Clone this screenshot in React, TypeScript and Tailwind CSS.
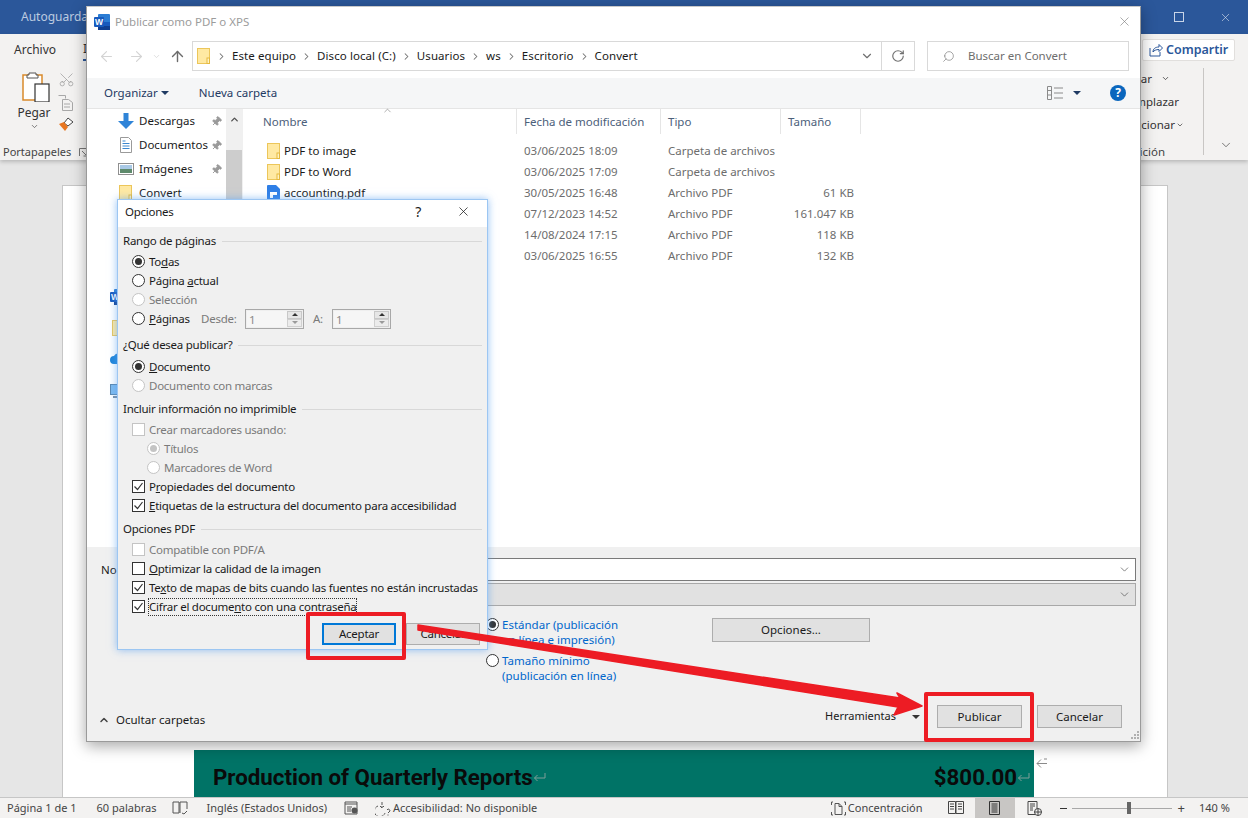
import React from "react";
import { ArrowLeft, ArrowRight, ArrowUp, ChevronDown, ChevronRight, ChevronUp, Pin, RotateCw, Scissors, Search, X } from "lucide-react";

const FolderIcon = ({ className = "" }: { className?: string }) => (
  <svg width="13" height="16" viewBox="0 0 13 16" className={className}>
    <rect x="0.5" y="0.5" width="12" height="15" fill="#ffe9a3" stroke="#ecc65a" />
    <rect x="10" y="10" width="2.5" height="5.5" fill="#fff3c4" stroke="#e6b93f" />
  </svg>
);

const PdfIcon = () => (
  <svg width="13" height="16" viewBox="0 0 13 16">
    <path d="M1 0h8l4 4v11a1 1 0 0 1-1 1H1a1 1 0 0 1-1-1V1a1 1 0 0 1 1-1z" fill="#2f7fe6" />
    <path d="M3 7h7v3H6v3H3z" fill="#fff" />
  </svg>
);

const WordIcon = () => (
  <svg width="16" height="16" viewBox="0 0 16 16">
    <rect x="4" y="0" width="12" height="16" rx="1" fill="#2b7cd3" />
    <rect x="4" y="8" width="12" height="4" fill="#185abd" />
    <rect x="4" y="12" width="12" height="4" fill="#103f91" />
    <rect x="0" y="3" width="10" height="10" rx="1" fill="#185abd" />
    <text x="5" y="11" textAnchor="middle" fontSize="8.5" fontWeight="700" fill="#fff" fontFamily="'Liberation Sans', sans-serif">W</text>
  </svg>
);

const Radio = ({ on = false, disabled = false }: { on?: boolean; disabled?: boolean }) => (
  <span className={`flex h-[13px] w-[13px] shrink-0 items-center justify-center rounded-full border bg-white ${disabled ? "border-[#c4c4c4]" : "border-[#333333]"}`}>
    {on && <span className={`h-[7px] w-[7px] rounded-full ${disabled ? "bg-[#c4c4c4]" : "bg-[#333333]"}`} />}
  </span>
);

const Check = ({ on = false, disabled = false }: { on?: boolean; disabled?: boolean }) => (
  <span className={`flex h-[13px] w-[13px] shrink-0 items-center justify-center border bg-white ${disabled ? "border-[#c4c4c4]" : "border-[#333333]"}`}>
    {on && (
      <svg width="11" height="11" viewBox="0 0 11 11">
        <path d="M1.5 5.5l3 3 5-6.5" fill="none" stroke="#333333" strokeWidth="1.2" />
      </svg>
    )}
  </span>
);

const Caret = ({ className = "" }: { className?: string }) => (
  <svg width="8" height="4" viewBox="0 0 8 4" className={className}>
    <path d="M0 0h8L4 4z" fill="currentColor" />
  </svg>
);

const ReturnMark = ({ className = "" }: { className?: string }) => (
  <svg width="13" height="11" viewBox="0 0 13 11" className={className}>
    <path d="M12 1v5H1.5M4.5 3L1.5 6l3 3" fill="none" stroke="#7f9f98" strokeWidth="1" />
  </svg>
);

const SectionHead = ({ title }: { title: string }) => (
  <div className="flex h-[18px] items-center pl-[5px] pr-[5px] pt-[2px] text-[#1a1a1a]">
    <span>{title}</span>
    <span className="ml-[6px] h-px flex-1 bg-[#d8d8d8]" />
  </div>
);

const Spin = () => (
  <div className="flex h-[20px] w-[59px] border border-[#a8a8a8] bg-[#efefef] p-px">
    <div className="flex-1 bg-[#f6f6f6] pl-[2px] leading-[18px] text-[#8a8a8a]">1</div>
    <div className="flex w-[15px] flex-col">
      <div className="flex flex-1 items-center justify-center border border-[#c8c8c8] bg-[#e6e6e6] text-[#333333]">
        <Caret className="h-[3px] w-[6px] rotate-180" />
      </div>
      <div className="flex flex-1 items-center justify-center border border-[#d0d0d0] bg-[#ececec] text-[#9a9a9a]">
        <Caret className="h-[3px] w-[6px]" />
      </div>
    </div>
  </div>
);

const Crumb = ({ label }: { label: string }) => (
  <>
    <ChevronRight size={11} strokeWidth={2.2} className="text-[#707070]" />
    <span className="text-[#1a1a1a]">{label}</span>
  </>
);

const files = [
  { icon: "folder", name: "PDF to image", date: "03/06/2025 18:09", type: "Carpeta de archivos", size: "" },
  { icon: "folder", name: "PDF to Word", date: "03/06/2025 17:09", type: "Carpeta de archivos", size: "" },
  { icon: "pdf", name: "accounting.pdf", date: "30/05/2025 16:48", type: "Archivo PDF", size: "61 KB" },
  { icon: "", name: "", date: "07/12/2023 14:52", type: "Archivo PDF", size: "161.047 KB" },
  { icon: "", name: "", date: "14/08/2024 17:15", type: "Archivo PDF", size: "118 KB" },
  { icon: "", name: "", date: "03/06/2025 16:55", type: "Archivo PDF", size: "132 KB" },
];

const PublishDialog = () => (
  <div className="absolute left-[86px] top-[6px] flex h-[736px] w-[1055px] flex-col border border-[#9a9a9a] border-t-[#c8c8c8] bg-white shadow-[0_4px_14px_rgba(0,0,0,0.35)]">
    <div className="flex h-[29px] shrink-0 items-center pl-[7px] pr-[8px]">
      <WordIcon />
      <span className="ml-[5px] text-[#9c9c9c]">Publicar como PDF o XPS</span>
      <X size={15} strokeWidth={1} className="ml-auto text-[#7a7a7a]" />
    </div>
    <div className="flex h-[42px] shrink-0 items-start pt-[5px] pl-[11px] pr-[11px]">
      <div className="flex h-[30px] w-[94px] items-center">
        <ArrowLeft size={17} strokeWidth={1.6} className="text-[#d4d4d4]" />
        <ArrowRight size={17} strokeWidth={1.6} className="ml-[13px] text-[#d4d4d4]" />
        <ChevronDown size={9} strokeWidth={2} className="ml-[7px] text-[#d4d4d4]" />
        <ArrowUp size={17} strokeWidth={2} className="ml-[8px] text-[#6b6b6b]" />
      </div>
      <div className="flex h-[30px] w-[723px] items-center border border-[#d9d9d9] pl-[4px]">
        <FolderIcon />
        <div className="ml-[6px] flex items-center gap-[5px] tracking-[0.08px]">
          <Crumb label="Este equipo" />
          <Crumb label="Disco local (C:)" />
          <Crumb label="Usuarios" />
          <Crumb label="ws" />
          <Crumb label="Escritorio" />
          <Crumb label="Convert" />
        </div>
        <ChevronDown size={14} strokeWidth={2} className="ml-auto mr-[7px] text-[#707070]" />
        <div className="flex h-full w-[33px] items-center justify-center border-l border-[#d9d9d9]">
          <RotateCw size={14} strokeWidth={2} className="text-[#707070]" />
        </div>
      </div>
      <div className="ml-[12px] flex h-[30px] w-[202px] items-center border border-[#d9d9d9] pl-[14px]">
        <Search size={13} strokeWidth={1.2} className="-scale-x-100 text-[#777777]" />
        <span className="ml-[13px] text-[#6d6d6d]">Buscar en Convert</span>
      </div>
    </div>
    <div className="flex h-[31px] shrink-0 items-center border-b border-[#e5e5e5] bg-[#f5f6f7] pl-[17px] pr-[14px] text-[#1f3a63]">
      <span>Organizar</span>
      <Caret className="ml-[3px]" />
      <span className="ml-[30px]">Nueva carpeta</span>
      <svg width="17" height="14" viewBox="0 0 17 14" className="ml-auto text-[#8a8a8a]">
        <path d="M0.5 0.5h4v13h-4zM0.5 4.5h4M0.5 9h4M7 2h9M7 7h9M7 12h9" fill="none" stroke="currentColor" />
      </svg>
      <Caret className="ml-[9px]" />
      <span className="ml-[29px] flex h-[16px] w-[16px] items-center justify-center rounded-full bg-[#0a66bd] text-[12px] font-bold leading-none text-white">?</span>
    </div>
    <div className="flex h-[438px] shrink-0">
      <div className="flex w-[156px] shrink-0">
        <div className="w-[139px] shrink-0">
          {[
            { label: "Descargas", icon: <svg width="16" height="16" viewBox="0 0 16 16"><path d="M5.5 0h5v8H16l-8 8-8-8h5.5z" fill="#2f84d8" /></svg> },
            { label: "Documentos", icon: <svg width="16" height="16" viewBox="0 0 16 16"><path d="M2.5.5h8l3 3v12h-11z" fill="#fff" stroke="#9a9a9a" /><path d="M4.5 4h3M4.5 6.5h7M4.5 9h7M4.5 11.5h7" stroke="#3b87cf" /></svg> },
            { label: "Imágenes", icon: <svg width="16" height="16" viewBox="0 0 16 16"><rect x=".5" y="2.5" width="15" height="11" fill="#fff" stroke="#8f8f8f" /><rect x="2" y="4" width="12" height="4" fill="#a9c9e6" /><rect x="2" y="8" width="12" height="4" fill="#5e8a6c" /></svg> },
          ].map((row) => (
            <div key={row.label} className="flex h-[24px] items-center pl-[31px]">
              {row.icon}
              <span className="ml-[5px] text-[#1a1a1a]">{row.label}</span>
              <Pin size={11} className="ml-auto mr-[4px] rotate-45 fill-[#9a9a9a] text-[#9a9a9a]" />
            </div>
          ))}
          <div className="flex h-[24px] items-center pl-[32px]">
            <FolderIcon />
            <span className="ml-[7px] text-[#1a1a1a]">Convert</span>
          </div>
          <div className="mt-[84px] flex flex-col pl-[23px]">
            <WordIcon />
            <FolderIcon className="ml-[2px] mt-[15px]" />
            <svg width="16" height="13" viewBox="0 0 16 13" className="mt-[15px]"><path d="M4 13a4 4 0 0 1 0-8 5 5 0 0 1 9 1 3.5 3.5 0 0 1 0 7z" fill="#1f84d8" /></svg>
            <svg width="16" height="15" viewBox="0 0 16 15" className="mt-[20px]"><rect x=".5" y=".5" width="15" height="10" fill="#7db9ee" stroke="#5b88b0" /><path d="M3 13h10" stroke="#7a8ea3" strokeWidth="2" /></svg>
          </div>
        </div>
        <div className="flex w-[16px] shrink-0 flex-col bg-[#f0f0f0]">
          <div className="flex h-[41px] justify-center pt-[5px]">
            <ChevronUp size={11} strokeWidth={3} className="text-[#505050]" />
          </div>
          <div className="flex-1 bg-[#cdcdcd]" />
        </div>
        <div className="w-px shrink-0 bg-[#f0f0f0]" />
      </div>
      <div className="relative flex-1 text-[#6d6d6d]">
        <ChevronUp size={11} strokeWidth={1.2} className="absolute left-[139px] -top-[4px] text-[#6d6d6d]" />
        <div className="grid h-[25px] grid-cols-[274px_144px_120px_80px] text-[#4c607a]">
          <div className="flex items-center border-r border-[#e5e5e5] pl-[20px]">Nombre</div>
          <div className="flex items-center border-r border-[#e5e5e5] pl-[7px]">Fecha de modificación</div>
          <div className="flex items-center border-r border-[#e5e5e5] pl-[7px]">Tipo</div>
          <div className="flex items-center border-r border-[#e5e5e5] pl-[7px]">Tamaño</div>
        </div>
        <div className="mt-[6px]">
          {files.map((f) => (
            <div key={f.date} className="grid h-[21px] grid-cols-[274px_144px_120px_80px] items-center">
              <div className="flex items-center pl-[24px] text-[#1a1a1a]">
                {f.icon === "folder" && <FolderIcon />}
                {f.icon === "pdf" && <PdfIcon />}
                <span className="ml-[4px]">{f.name}</span>
              </div>
              <div className="pl-[7px]">{f.date}</div>
              <div className="pl-[7px]">{f.type}</div>
              <div className="pr-[7px] text-right">{f.size}</div>
            </div>
          ))}
        </div>
      </div>
    </div>
    <div className="relative flex-1 bg-[#f0f0f0] pt-[11px]">
      <div className="flex h-[23px] items-center pr-[4px]">
        <span className="ml-[14px] w-[120px] shrink-0 text-[#1a1a1a]">Nombre de archivo:</span>
        <div className="flex h-full flex-1 items-center justify-end border border-[#7a7a7a] bg-white pr-[4px]">
          <ChevronDown size={13} strokeWidth={1.2} className="text-[#444444]" />
        </div>
      </div>
      <div className="mt-[2px] flex h-[23px] items-center pr-[4px]">
        <span className="w-[134px] shrink-0" />
        <div className="flex h-full flex-1 items-center justify-end border border-[#a8a8a8] bg-[#e1e1e1] pr-[4px]">
          <ChevronDown size={13} strokeWidth={1.2} className="text-[#444444]" />
        </div>
      </div>
      <div className="mt-[12px] flex pl-[399px]">
        <div className="-mt-px w-[226px] leading-[15px] text-[#0066cc]">
          <div className="flex">
            <span className="mt-px"><Radio on /></span>
            <span className="ml-[3px]">Estándar (publicación<br />en línea e impresión)</span>
          </div>
          <div className="mt-[6px] flex">
            <span className="mt-px"><Radio /></span>
            <span className="ml-[3px]">Tamaño mínimo<br />(publicación en línea)</span>
          </div>
        </div>
        <button className="h-[24px] w-[158px] border border-[#adadad] bg-[#e1e1e1] text-[#1a1a1a]">Opciones...</button>
      </div>
      <div className="mt-[22px] flex h-[23px] items-center pl-[11px] pr-[18px] text-[#1a1a1a]">
        <ChevronUp size={12} strokeWidth={3} className="mt-[6px] text-[#444444]" />
        <span className="ml-[6px] mt-[6px]">Ocultar carpetas</span>
        <span className="ml-auto text-[11px]">Herramientas</span>
        <Caret className="ml-[16px] text-[#333333]" />
        <button className="ml-[17px] h-[23px] w-[85px] border border-[#adadad] bg-[#e1e1e1]">Publicar</button>
        <button className="ml-[15px] h-[23px] w-[85px] border border-[#adadad] bg-[#e1e1e1]">Cancelar</button>
      </div>
      <svg width="8" height="8" viewBox="0 0 8 8" className="absolute bottom-[2px] right-[1px] text-[#b0b0b0]">
        <path d="M6 0h2v2H6zM3 3h2v2H3zM6 3h2v2H6zM0 6h2v2H0zM3 6h2v2H3zM6 6h2v2H6z" fill="currentColor" />
      </svg>
    </div>
  </div>
);

const OptionsDialog = () => (
  <div className="absolute left-[117px] top-[199px] flex h-[451px] w-[371px] flex-col whitespace-nowrap border border-[#9cc6f2] bg-[#f0f0f0] tracking-[-0.25px] text-[#1a1a1a] shadow-[0_0_8px_rgba(90,160,240,0.65)]">
    <div className="flex h-[27px] shrink-0 items-center bg-white pb-[4px] pl-[7px] pr-[16px]">
      <span>Opciones</span>
      <span className="ml-auto mr-[35px] text-[14px]">?</span>
      <X size={15} strokeWidth={1.2} className="text-[#1a1a1a]" />
    </div>
    <div className="mt-[4px]"><SectionHead title="Rango de páginas" /></div>
    <div className="mt-[3px] pl-[14px]">
      <div className="flex h-[19px] items-center gap-[4px]"><Radio on /><span>To<u>d</u>as</span></div>
      <div className="flex h-[19px] items-center gap-[4px]"><Radio /><span>Página <u>a</u>ctual</span></div>
      <div className="flex h-[19px] items-center gap-[4px] text-[#7a7a7a]"><Radio disabled /><span>Selección</span></div>
      <div className="flex h-[19px] items-center gap-[4px]">
        <Radio />
        <span className="w-[48px]"><u>P</u>áginas</span>
        <span className="w-[40px] text-[#7a7a7a]">Desde:</span>
        <Spin />
        <span className="ml-[5px] w-[15px] text-[#7a7a7a]">A:</span>
        <Spin />
      </div>
    </div>
    <div className="mt-[7px]"><SectionHead title="¿Qué desea publicar?" /></div>
    <div className="mt-[4px] pl-[14px]">
      <div className="flex h-[19px] items-center gap-[4px]"><Radio on /><span><u>D</u>ocumento</span></div>
      <div className="flex h-[19px] items-center gap-[4px] text-[#7a7a7a]"><Radio disabled /><span>Documento con marcas</span></div>
    </div>
    <div className="mt-[4px]"><SectionHead title="Incluir información no imprimible" /></div>
    <div className="mt-[3px] pl-[14px]">
      <div className="flex h-[19px] items-center gap-[4px] text-[#7a7a7a]"><Check disabled /><span>Crear marcadores usando:</span></div>
      <div className="flex h-[19px] items-center gap-[4px] pl-[15px] text-[#7a7a7a]"><Radio on disabled /><span>Títulos</span></div>
      <div className="flex h-[19px] items-center gap-[4px] pl-[15px] text-[#7a7a7a]"><Radio disabled /><span>Marcadores de Word</span></div>
      <div className="flex h-[19px] items-center gap-[4px]"><Check on /><span>P<u>r</u>opiedades del documento</span></div>
      <div className="flex h-[19px] items-center gap-[4px]"><Check on /><span><u>E</u>tiquetas de la estructura del documento para accesibilidad</span></div>
    </div>
    <div className="mt-[4px]"><SectionHead title="Opciones PDF" /></div>
    <div className="mt-[3px] pl-[14px]">
      <div className="flex h-[19px] items-center gap-[4px] text-[#7a7a7a]"><Check disabled /><span>Compatible con PDF/A</span></div>
      <div className="flex h-[19px] items-center gap-[4px]"><Check /><span><u>O</u>ptimizar la calidad de la imagen</span></div>
      <div className="flex h-[19px] items-center gap-[4px]"><Check on /><span>Te<u>x</u>to de mapas de bits cuando las fuentes no están incrustadas</span></div>
      <div className="flex h-[19px] items-center gap-[3px]"><Check on /><span className="border border-dotted border-[#333333] leading-[16px]">Cifrar el docume<u>n</u>to con una contraseña</span></div>
    </div>
    <div className="mt-[7px] flex justify-end gap-[10px] pr-[7px]">
      <button className="h-[22px] w-[74px] border-2 border-[#0078d7] bg-[#e1e1e1]">Aceptar</button>
      <button className="h-[22px] w-[74px] border border-[#adadad] bg-[#e1e1e1]">Cancelar</button>
    </div>
  </div>
);

export default function App() {
  return (
    <div className="relative h-[818px] w-[1248px] overflow-hidden bg-[#e6e6e6] font-['Noto_Sans','Liberation_Sans',sans-serif] text-[11.5px]">
      <div className="flex h-full flex-col">
        <div className="flex h-[34px] shrink-0 items-center bg-[#2b579a] pl-[21px] pr-[16px] text-[12px] text-white">
          <span className="text-[#bccbe0]">Autoguardado</span>
          <svg width="10" height="10" viewBox="0 0 10 10" className="ml-auto"><rect x=".5" y=".5" width="9" height="9" fill="none" stroke="#c9d5e8" /></svg>
          <X size={13} strokeWidth={1.1} className="ml-[35px] text-[#dfe6f1]" />
        </div>
        <div className="relative h-[126px] shrink-0 bg-[#f3f2f1] shadow-[0_2px_4px_rgba(0,0,0,0.2)]">
          <div className="flex h-[30px] items-center pl-[14px] pr-[13px] pt-[2px] text-[12px] text-[#333333]">
            <span>Archivo</span>
            <span className="ml-[27px] border-b-2 border-[#2b579a] pb-[1px]">Inicio</span>
            <div className="ml-auto flex h-[22px] w-[93px] items-center rounded-[2px] border border-[#e1dfdd] bg-white pl-[6px] text-[12.5px] font-semibold text-[#2b579a]">
              <svg width="14" height="14" viewBox="0 0 14 14"><path d="M1 5v8h10V9M4 9c0-3 2-5 6-5V1.500l3.500 3.500L10 8.500V6.500C7 6.500 5 7.500 4 9z" fill="none" stroke="#2b579a" /></svg>
              <span className="ml-[3px]">Compartir</span>
            </div>
          </div>
          <div className="flex h-[96px]">
            <div className="w-[92px] shrink-0">
              <div className="flex h-[80px]">
                <div className="flex w-[58px] flex-col items-center pl-[10px] pt-[8px]">
                  <svg width="28" height="30" viewBox="0 0 28 30" className="ml-[3px]">
                    <rect x="1" y="3" width="19" height="25" fill="#fff" stroke="#d98a2b" strokeWidth="1.5" />
                    <path d="M7 3V1h7v2h2v3H5V3z" fill="#fff" stroke="#555" />
                    <rect x="13" y="12" width="14" height="18" fill="#fff" stroke="#333" strokeWidth="1.2" />
                  </svg>
                  <span className="mt-[2px] text-[12px] text-[#333333]">Pegar</span>
                  <ChevronDown size={9} strokeWidth={2} className="text-[#555555]" />
                </div>
                <div className="flex flex-col pt-[7px]">
                  <Scissors size={17} strokeWidth={1} className="-rotate-90 text-[#9a9a9a]" />
                  <svg width="15" height="16" viewBox="0 0 15 16" className="mt-[7px]"><path d="M.5.5h7v3M4.500 4.500h6l4 3v8h-10zM6 9h6M6 12h6" fill="none" stroke="#a8a8a8" /></svg>
                  <svg width="16" height="15" viewBox="0 0 16 15" className="mt-[6px]"><path d="M6 6l4-5 5 4-5 4z" fill="#fff" stroke="#444" /><path d="M1 7l5-2 4 5-3 4z" fill="#e87722" /></svg>
                </div>
              </div>
              <div className="flex items-center pl-[3px] text-[11px] text-[#444444]">
                <span>Portapapeles</span>
                <svg width="9" height="9" viewBox="0 0 9 9" className="ml-[8px]"><path d="M.5 8V.5H8M3 3l5 5M8 4.500V8H4.500" fill="none" stroke="#777" /></svg>
              </div>
            </div>
            <div className="ml-auto flex items-start">
              <div className="flex flex-col items-end pt-[3px] leading-[23px] text-[#333333]">
                <div className="flex items-center pr-[33px]">Buscar<ChevronDown size={9} strokeWidth={2} className="ml-[9px]" /></div>
                <div className="pr-[24px]">Reemplazar</div>
                <div className="flex items-center pr-[19px]">Seleccionar<ChevronDown size={8} strokeWidth={2} className="ml-[1px]" /></div>
                <div className="mt-[4px] pr-[38px] text-[#444444]">Edición</div>
              </div>
              <div className="mt-[4px] h-[87px] w-px bg-[#c8c6c4]" />
              <div className="flex h-[96px] w-[44px] items-end justify-center pb-[8px]">
                <ChevronDown size={14} strokeWidth={1.2} className="text-[#444444]" />
              </div>
            </div>
          </div>
        </div>
        <div className="min-h-0 flex-1 overflow-hidden pl-[62px] pr-[80px] pt-[25px]">
          <div className="h-[700px] w-[1106px] border border-[#c6c6c6] bg-white">
            <div className="ml-[131px] mt-[564px] flex h-[60px] w-[840px] items-start bg-[#007366] pl-[19px] pr-[4px] pt-[12px] font-['Roboto',sans-serif] text-[22.3px] font-bold leading-[30px] text-[#0a0a0a]">
              <span>Production of Quarterly Reports</span>
              <ReturnMark className="mt-[10px]" />
              <span className="ml-auto">$800.00</span>
              <ReturnMark className="mt-[10px]" />
            </div>
          </div>
        </div>
        <div className="flex h-[21px] shrink-0 items-center border-t border-[#c6c6c6] bg-[#f3f2f1] pl-[7px] text-[11px] text-[#444444]">
          <span>Página 1 de 1</span>
          <span className="ml-[20px]">60 palabras</span>
          <svg width="16" height="14" viewBox="0 0 16 14" className="ml-[16px]"><path d="M1 1h6v11H1zM8 12V1h7v7M10 12l2 1 3-3" fill="none" stroke="#555" /></svg>
          <span className="ml-[18px]">Inglés (Estados Unidos)</span>
          <svg width="15" height="14" viewBox="0 0 15 14" className="ml-[17px]"><path d="M1 1h12v12H1zM1 3h12M3 6h5M3 8h4M3 10h4" fill="none" stroke="#555" /><circle cx="10.500" cy="9.500" r="3" fill="#555" /></svg>
          <svg width="16" height="15" viewBox="0 0 16 15" className="ml-[16px]"><path d="M7 1v6M5 5l2 2 2-2M3 5a5.500 5.500 0 1 0 7 7" fill="none" stroke="#555" strokeDasharray="3 1" /><path d="M12 9a1.500 1.500 0 1 1 2 2l-1 1M13 13.500v1" fill="none" stroke="#555" /></svg>
          <span className="ml-[2px]">Accesibilidad: No disponible</span>
          <svg width="15" height="15" viewBox="0 0 15 15" className="ml-auto"><path d="M2 1H.500v3M.500 11v3H2M13 1h1.500v3M14.500 11v3H13M4 2.500h4l3 3v8H4zM8 2.500v3h3" fill="none" stroke="#555" /></svg>
          <span className="ml-[2px]">Concentración</span>
          <svg width="16" height="14" viewBox="0 0 16 14" className="ml-[25px]"><path d="M.5.5h7v12h-7zM8 .5h7.500v12H8zM2 3h4M2 5.500h4M2 8h4M10 3h4M10 5.500h4M10 8h4" fill="none" stroke="#444" /></svg>
          <div className="ml-[11px] flex h-full w-[40px] items-center justify-center bg-[#c8c6c4]">
            <svg width="11" height="14" viewBox="0 0 11 14"><path d="M.5.5h10v13H.5zM2.500 3h6M2.500 5h6M2.500 7h6M2.500 9h6M2.500 11h6" fill="none" stroke="#333" /></svg>
          </div>
          <svg width="15" height="15" viewBox="0 0 15 15" className="ml-[12px]"><path d="M1 .5h9v13H1zM3 3h5M3 5h5M3 7h3M3 9h3" fill="none" stroke="#444" /><circle cx="11" cy="11" r="3.500" fill="#f3f2f1" stroke="#444" /><path d="M7.500 11h7M11 7.500v7" stroke="#444" /></svg>
          <span className="ml-[18px] h-px w-[7px] bg-[#333333]" />
          <div className="ml-[5px] flex h-[12px] w-[100px] items-center">
            <span className="h-px w-[55px] bg-[#a8a8a8]" />
            <span className="h-[12px] w-[4px] bg-[#666666]" />
            <span className="h-px flex-1 bg-[#a8a8a8]" />
          </div>
          <span className="ml-[6px] text-[13px] leading-none">+</span>
          <span className="ml-[14px] w-[49px]">140 %</span>
        </div>
      </div>

      <PublishDialog />
      <OptionsDialog />

      <svg width="12" height="11" viewBox="0 0 12 11" className="absolute left-[1036px] top-[758px]">
        <path d="M11 5.500H1M5 1.500L1 5.500l4 4M8 1h3" fill="none" stroke="#8a8a8a" />
      </svg>

      <div className="absolute left-[306px] top-[612px] h-[48px] w-[100px] rounded-[2px] border-[4px] border-[#ed1c24]" />
      <div className="absolute left-[924px] top-[692px] h-[50px] w-[110px] rounded-[2px] border-[4px] border-[#ed1c24]" />
      <svg width="1248" height="818" viewBox="0 0 1248 818" className="pointer-events-none absolute left-0 top-0">
        <polygon points="418,625 900,698 897,693 922,706 894,715 898,707 418,630" fill="#ed1c24" stroke="#ed1c24" strokeWidth="1.5" strokeLinejoin="round" />
      </svg>
    </div>
  );
}
